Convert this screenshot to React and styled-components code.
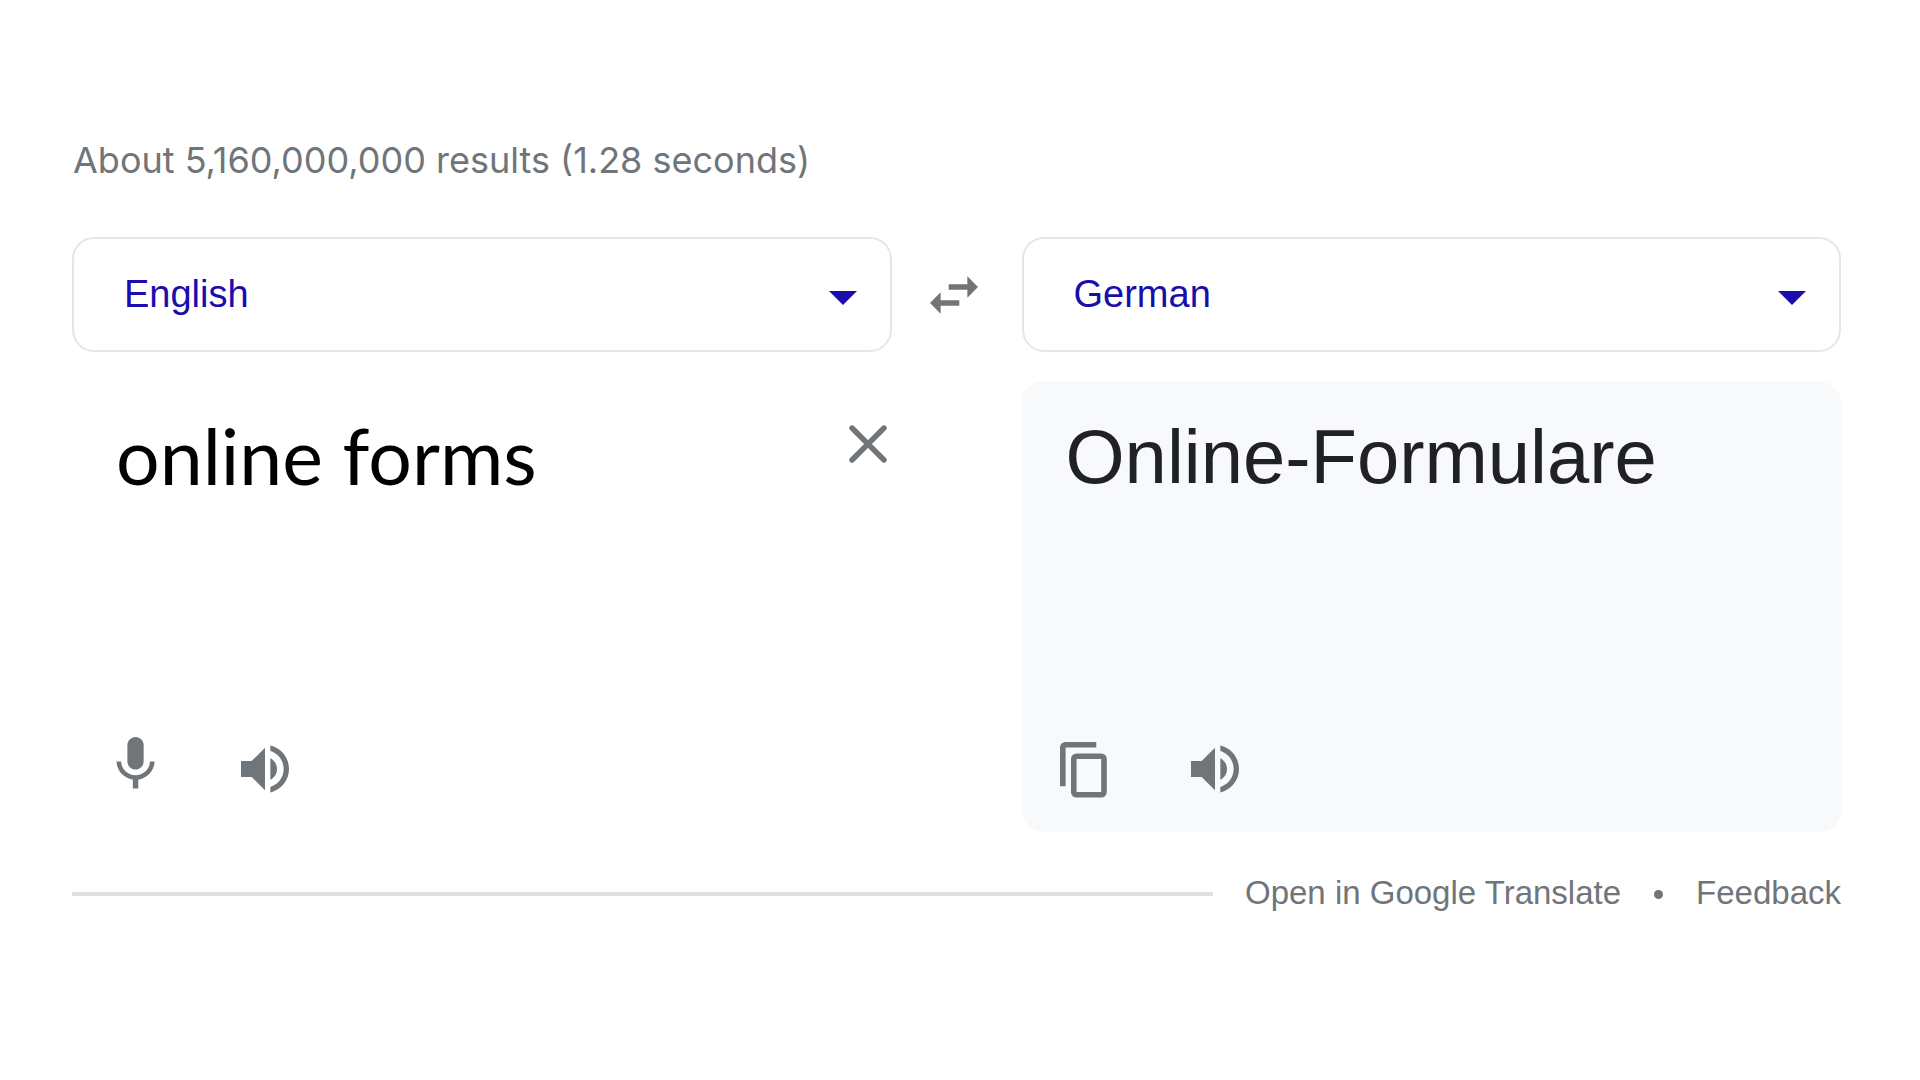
import { useState } from "react";
import styled, { createGlobalStyle } from "styled-components";

export default function App() {
  const [text, setText] = useState("online forms");

  return (
    <>
      <GlobalStyle />
      <Page>
        <Stats>About 5,160,000,000 results (1.28 seconds)</Stats>

        <Languages>
          <LanguagePicker label="Source language" initial="English" />
          <SwapButton type="button" aria-label="Swap languages">
            <SwapIcon />
          </SwapButton>
          <LanguagePicker label="Target language" initial="German" />
        </Languages>

        <Panels>
          <Panel>
            <InputRow>
              <SourceText
                aria-label="Text to translate"
                rows={1}
                spellCheck={false}
                value={text}
                onChange={(e) => setText(e.target.value)}
              />
              <ClearButton type="button" aria-label="Clear text" onClick={() => setText("")}>
                <CloseIcon />
              </ClearButton>
            </InputRow>
            <Actions>
              <IconButton type="button" aria-label="Translate by voice">
                <MicIcon />
              </IconButton>
              <IconButton type="button" aria-label="Listen to source">
                <SpeakerIcon />
              </IconButton>
            </Actions>
          </Panel>

          <Panel $filled>
            <Translation lang="de">Online-Formulare</Translation>
            <Actions>
              <IconButton type="button" aria-label="Copy translation">
                <CopyIcon />
              </IconButton>
              <IconButton type="button" aria-label="Listen to translation">
                <SpeakerIcon />
              </IconButton>
            </Actions>
          </Panel>
        </Panels>

        <Footer>
          <Rule />
          <FooterLink href="#translate">Open in Google Translate</FooterLink>
          <Dot />
          <FooterLink href="#feedback">Feedback</FooterLink>
        </Footer>
      </Page>
    </>
  );
}

function LanguagePicker({ label, initial }) {
  return (
    <Picker>
      <Select aria-label={label} defaultValue={initial}>
        <option>English</option>
        <option>German</option>
      </Select>
      <Arrow width="28" height="14" viewBox="0 0 28 14" aria-hidden="true">
        <path d="M0 0h28L14 14z" fill="currentColor" />
      </Arrow>
    </Picker>
  );
}

const SwapIcon = () => (
  <svg width="64" height="64" viewBox="0 0 24 24" fill="currentColor">
    <path d="M6.99 11L3 15l3.99 4v-3H14v-2H6.99v-3zM21 9l-3.99-4v3H10v2h7.01v3L21 9z" />
  </svg>
);

const CloseIcon = () => (
  <svg
    width="38"
    height="38"
    viewBox="0 0 38 38"
    fill="none"
    stroke="currentColor"
    strokeWidth="5.4"
    strokeLinecap="round"
  >
    <path d="M3 3l32 32M35 3L3 35" />
  </svg>
);

const MicIcon = () => (
  <svg width="64" height="64" viewBox="0 2 23.6 23.6" fill="currentColor">
    <path d="M12 14c1.66 0 2.99-1.34 2.99-3L15 5c0-1.66-1.34-3-3-3S9 3.34 9 5v6c0 1.66 1.34 3 3 3zm5.3-3c0 3-2.54 5.1-5.3 5.1S6.7 14 6.7 11H5c0 3.41 2.72 6.23 6 6.72V21h2v-3.28c3.28-.48 6-3.3 6-6.72h-1.7z" />
  </svg>
);

const SpeakerIcon = () => (
  <svg width="64" height="64" viewBox="0 0 24 24" fill="currentColor">
    <path d="M3 9v6h4l5 5V4L7 9H3zm13.5 3c0-1.77-1.02-3.29-2.5-4.03v8.05c1.48-.73 2.5-2.25 2.5-4.02zM14 3.23v2.06c2.89.86 5 3.54 5 6.71s-2.11 5.85-5 6.71v2.06c4.01-.91 7-4.49 7-8.77s-2.99-7.86-7-8.77z" />
  </svg>
);

const CopyIcon = () => (
  <svg width="64" height="64" viewBox="0 0 64 64" fill="none" stroke="currentColor" strokeWidth="5.6">
    <path d="M9.8 49.2V10.3a2.6 2.6 0 0 1 2.6-2.6H43.3" />
    <rect x="20.8" y="19.2" width="30.2" height="38.6" rx="2.6" />
  </svg>
);

const GlobalStyle = createGlobalStyle`
  * {
    box-sizing: border-box;
  }

  body {
    margin: 0;
    background: #ffffff;
    color: #70757a;
    font-family: "Liberation Sans", Arial, sans-serif;
  }

  svg {
    display: block;
  }
`;

const Page = styled.main`
  padding: 136px 79px 48px 72px;
`;

const Stats = styled.p`
  margin: 0 0 53px;
  padding-left: 1px;
  font-family: Inter, sans-serif;
  font-size: 36px;
  line-height: 48px;
`;

const Languages = styled.div`
  display: grid;
  grid-template-columns: minmax(0, 1fr) 130px minmax(0, 1fr);
  align-items: center;
`;

const Picker = styled.div`
  display: grid;
  align-items: center;
  color: #1a0dab;
`;

const Select = styled.select`
  grid-area: 1 / 1;
  width: 100%;
  height: 115px;
  padding: 0 80px 2px 50px;
  border: 2px solid #e4e6ea;
  border-radius: 22px;
  appearance: none;
  background: #ffffff;
  color: inherit;
  font-family: inherit;
  font-size: 38px;
`;

const Arrow = styled.svg`
  grid-area: 1 / 1;
  justify-self: end;
  margin: 6px 35px 0 0;
  pointer-events: none;
`;

const SwapButton = styled.button`
  justify-self: start;
  margin-left: 30px;
  padding: 0;
  border: none;
  background: none;
  color: #70757a;
`;

const Panels = styled.div`
  display: grid;
  grid-template-columns: repeat(2, minmax(0, 1fr));
  gap: 130px;
  margin-top: 29px;
`;

const Panel = styled.section`
  display: flex;
  flex-direction: column;
  justify-content: space-between;
  min-height: 451px;
  padding: 32px 0 31px;
  border-radius: 22px;
  background: ${({ $filled }) => ($filled ? "#f8f9fb" : "transparent")};
`;

const InputRow = styled.div`
  display: flex;
  align-items: flex-start;
`;

const SourceText = styled.textarea`
  flex: 1;
  min-width: 0;
  height: 88px;
  padding: 0 0 0 44px;
  border: none;
  outline: none;
  resize: none;
  overflow: hidden;
  background: transparent;
  color: #000000;
  font-family: Lato, sans-serif;
  font-size: 77px;
  line-height: 84px;
`;

const ClearButton = styled.button`
  margin: 12px 5px 0 0;
  padding: 0;
  border: none;
  background: none;
  color: #70757a;
`;

const Translation = styled.div`
  padding-left: 44px;
  color: #202124;
  font-size: 76px;
  line-height: 88px;
`;

const Actions = styled.div`
  display: flex;
  gap: 66px;
  padding-left: 31px;
`;

const IconButton = styled.button`
  padding: 0;
  border: none;
  background: none;
  color: #70757a;
`;

const Footer = styled.footer`
  display: flex;
  align-items: center;
  margin-top: 41px;
`;

const Rule = styled.hr`
  flex: 1;
  height: 4px;
  margin: 0 32px 0 0;
  border: none;
  background: #dfe0e3;
`;

const FooterLink = styled.a`
  padding-bottom: 2px;
  color: #70757a;
  font-size: 33px;
  line-height: 40px;
  text-decoration: none;
`;

const Dot = styled.span`
  width: 9px;
  height: 9px;
  margin: 0 33px;
  border-radius: 50%;
  background: #70757a;
`;
